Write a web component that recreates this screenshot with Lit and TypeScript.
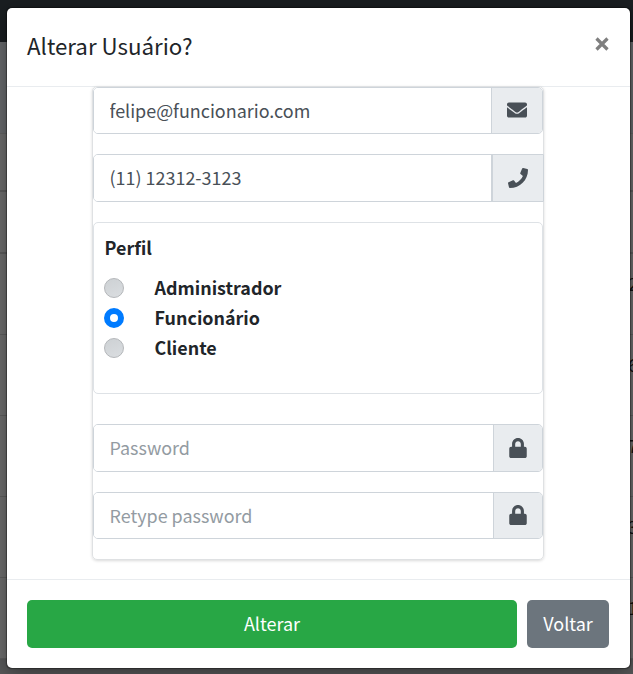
import { LitElement, html, css, svg } from "lit";
import { customElement, state } from "lit/decorators.js";

const icons: Record<string, { box: string; w: number; d: string }> = {
  envelope: {
    box: "0 0 512 512", w: 20,
    d: "M502.3 190.8c3.9-3.1 9.7-.2 9.7 4.7V400c0 26.500-21.500 48-48 48H48c-26.500 0-48-21.500-48-48V195.600c0-5 5.700-7.800 9.700-4.700 22.400 17.400 52.100 39.500 154.100 113.600 21.100 15.400 56.700 47.800 92.200 47.600 35.700.3 72-32.800 92.300-47.600 102-74.100 131.600-96.300 154-113.700zM256 320c23.200.4 56.600-29.200 73.400-41.400 132.700-96.300 142.800-104.700 173.400-128.700 5.800-4.500 9.200-11.500 9.200-18.900v-19c0-26.500-21.500-48-48-48H48c-26.500 0-48 21.500-48 48v19c0 7.400 3.400 14.300 9.200 18.900 30.600 23.900 40.700 32.400 173.400 128.700 16.800 12.200 50.200 41.800 73.400 41.400z",
  },
  phone: {
    box: "0 0 512 512", w: 20,
    d: "M493.4 24.6l-104-24c-11.300-2.600-22.900 3.300-27.500 13.900l-48 112c-4.200 9.800-1.400 21.300 6.900 28l60.600 49.600c-36 76.700-98.900 140.500-177.200 177.200l-49.600-60.600c-6.800-8.300-18.200-11.100-28-6.900l-112 48C3.900 366.500-2 378.100.6 389.400l24 104C27.100 504.200 36.700 512 48 512c256.100 0 464-207.500 464-464 0-11.200-7.700-20.900-18.600-23.400z",
  },
  lock: {
    box: "0 0 448 512", w: 18,
    d: "M400 224h-24v-72C376 68.200 307.800 0 224 0S72 68.200 72 152v72H48c-26.500 0-48 21.500-48 48v192c0 26.500 21.500 48 48 48h352c26.500 0 48-21.500 48-48V272c0-26.500-21.500-48-48-48zm-104 0H152v-72c0-39.700 32.300-72 72-72s72 32.300 72 72v72z",
  },
};

const icon = (name: string) => {
  const i = icons[name];
  return html`<svg width=${i.w} height="20" viewBox=${i.box} fill="currentColor">${svg`<path d=${i.d}></path>`}</svg>`;
};

@customElement("app-root")
export class AppRoot extends LitElement {
  @state() private profile = "Funcionário";

  static styles = css`
    :host {
      display: block;
      position: relative;
      width: 633px;
      height: 674px;
      overflow: hidden;
      background: #6e6e6e;
      color: #212529;
      font: 18px/30px "Noto Sans CJK JP", "Noto Sans", sans-serif;
    }
    * { box-sizing: border-box; }
    .page { position: absolute; inset: 0; display: flex; flex-direction: column; }
    .nav { height: 42px; flex: none; background: #1a1e21; }
    .top { height: 92px; flex: none; background: #686a6d; border-bottom: 1px solid #636363; }
    .line { height: 58px; flex: none; border-bottom: 2px solid #5c5c5c; }
    .line.tall { height: 62px; }
    .row {
      height: 81px; flex: none; border-bottom: 1px solid #5e5e5e;
      display: flex; align-items: center; justify-content: flex-end; color: #111;
    }
    .row span { width: 5px; white-space: nowrap; margin-top: -23px; }
    .rest { flex: 1; background: #58595a; }
    .modal {
      position: relative;
      margin: 8px 3px 0 7px;
      width: 623px;
      height: 660px;
      display: flex;
      flex-direction: column;
      background: #fff;
      border-radius: 5px;
      box-shadow: 0 5px 20px rgba(0, 0, 0, 0.400), 0 0 1px 0.500px rgba(0, 0, 0, 0.350);
    }
    .header {
      height: 79px; flex: none; padding: 0 20px;
      display: flex; align-items: center; justify-content: space-between;
      border-bottom: 1px solid #e9ecef;
    }
    .title { margin: -5px 0 0; font-size: 22.300px; font-weight: 400; line-height: 38px; }
    .close {
      border: 0; background: none; padding: 0; width: 16px; height: 16px;
      margin: -6px 0.500px 0 0; color: #7f7f7f; display: flex; align-items: center; justify-content: center;
    }
    .body { flex: 1; padding: 0 85px; }
    .card {
      width: 452px; height: 474px; margin-top: -1px;
      border: 1px solid #dfe1e3; border-radius: 5px;
      box-shadow: 0 1px 3px rgba(0, 0, 0, 0.150);
      display: flex; flex-direction: column;
    }
    .group {
      height: 48px; flex: none; width: 450px; margin-bottom: 20px;
      display: flex; border: 1px solid #ced4da; border-radius: 5px; overflow: hidden;
    }
    .group.short { height: 47px; }
    .group.square { width: 451px; border-radius: 5px 0 0 5px; }
    .input {
      flex: 1; min-width: 0; border: 0; outline: 0; background: #fff;
      padding: 0 15px 2px 15.500px; font: inherit; font-size: 17.950px; color: #495057;
    }
    .input::placeholder { color: #939ba2; opacity: 1; }
    .addon {
      width: 49px; flex: none; display: flex; align-items: center; justify-content: center;
      background: #e9ecef; border-left: 1px solid #ced4da; color: #495057;
    }
    .short .addon { padding-bottom: 2px; }
    .addon.mail { width: 51px; }
    .addon.phone { width: 52px; border-left-width: 2px; }
    .profile {
      width: 450px; height: 172px; flex: none; margin: 0 0 30px;
      padding: 9px 10px 0; border: 1px solid #dee2e6; border-radius: 5px;
      font-weight: 700; font-size: 17.900px;
    }
    .legend { margin-bottom: 10px; padding-left: 0.500px; }
    .option { display: flex; align-items: center; height: 30px; cursor: pointer; }
    .dot {
      width: 20px; height: 20px; margin: 2px 30.500px 0 0; border-radius: 50%;
      border: 1px solid #b4b7ba; background: linear-gradient(160deg, #cdd1d4, #dadde0);
    }
    .dot.on { border: 6px solid #007bff; background: #fff; }
    .footer {
      height: 89px; flex: none; padding: 20px 21px 20px 20px;
      display: flex; gap: 10px; border-top: 1px solid #e9ecef;
    }
    .btn {
      height: 48px; border: 0; border-radius: 5px; color: #fff;
      font: inherit; padding: 0 0 2px; flex: 1; background: #28a745;
    }
    .btn.back { flex: 0 0 82px; background: #6c757d; }
  `;

  render() {
    return html`
      <div class="page">
        <div class="nav"></div>
        <div class="top"></div>
        <div class="line"></div>
        <div class="line tall"></div>
        ${["2", "6", "7", "3", "1"].map((n) => html`<div class="row"><span>${n}</span></div>`)}
        <div class="rest"></div>
      </div>
      <div class="modal">
        <div class="header">
          <h4 class="title">Alterar Usuário?</h4>
          <button class="close" aria-label="Close">
            <svg width="14" height="14" viewBox="0 0 14 14" stroke="currentColor" stroke-width="3.200">
              <path d="M1.500 1.500 12.500 12.500M12.500 1.500 1.500 12.500"></path>
            </svg>
          </button>
        </div>
        <div class="body">
          <div class="card">
            <div class="group short">
              <input class="input" .value=${"felipe@funcionario.com"} />
              <div class="addon mail">${icon("envelope")}</div>
            </div>
            <div class="group square">
              <input class="input" .value=${"(11) 12312-3123"} />
              <div class="addon phone">${icon("phone")}</div>
            </div>
            <div class="profile">
              <div class="legend">Perfil</div>
              ${["Administrador", "Funcionário", "Cliente"].map(
                (p) => html`<div class="option" @click=${() => (this.profile = p)}>
                  <span class="dot ${p === this.profile ? "on" : ""}"></span>${p}
                </div>`
              )}
            </div>
            <div class="group">
              <input class="input" type="password" placeholder="Password" />
              <div class="addon">${icon("lock")}</div>
            </div>
            <div class="group short">
              <input class="input" type="password" placeholder="Retype password" />
              <div class="addon">${icon("lock")}</div>
            </div>
          </div>
        </div>
        <div class="footer">
          <button class="btn">Alterar</button>
          <button class="btn back">Voltar</button>
        </div>
      </div>
    `;
  }
}
